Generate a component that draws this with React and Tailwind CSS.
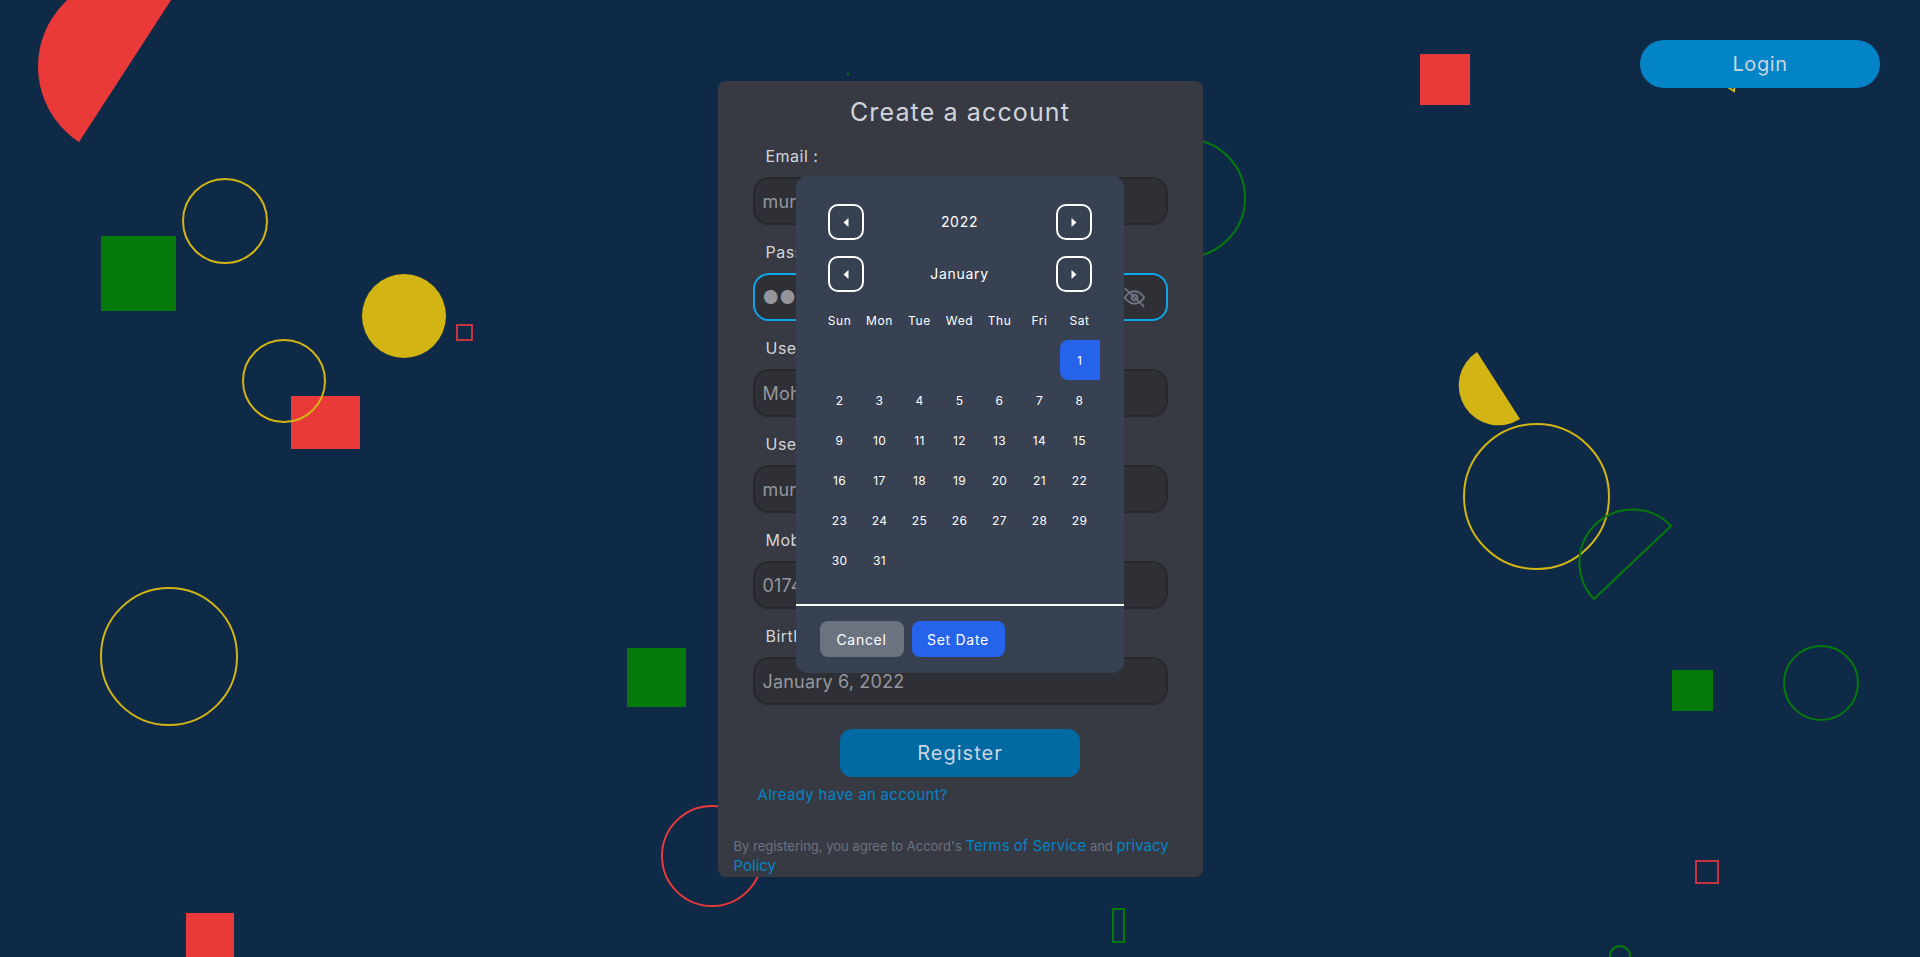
import React from 'react';

const fields = [
    { label: 'Email :', value: 'murad@gmail.com' },
    { label: 'Password :', value: '●●●●●●●●', password: true },
    { label: 'User Name :', value: 'Mohammad Murad' },
    { label: 'User Id :', value: 'murad123' },
    { label: 'Mobile :', value: '01745678901' },
    { label: 'Birthday :', value: 'January 6, 2022' },
];

const weeks = [
    ['', '', '', '', '', '', 1],
    [2, 3, 4, 5, 6, 7, 8],
    [9, 10, 11, 12, 13, 14, 15],
    [16, 17, 18, 19, 20, 21, 22],
    [23, 24, 25, 26, 27, 28, 29],
    [30, 31, '', '', '', '', ''],
];

const days = ['Sun', 'Mon', 'Tue', 'Wed', 'Thu', 'Fri', 'Sat'];

const Background = () => (
    <div className="absolute inset-0 overflow-hidden">
        <div className="absolute left-[101px] top-[236px] h-[75px] w-[75px] bg-[#057a0b]" />
        <div className="absolute left-[182px] top-[178px] h-[86px] w-[86px] rounded-full border-2 border-[#d2b414]" />
        <div className="absolute left-[362px] top-[274px] h-[84px] w-[84px] rounded-full bg-[#d2b414]" />
        <div className="absolute left-[456px] top-[324px] h-[17px] w-[17px] border-2 border-[#c9323f]" />
        <div className="absolute left-[291px] top-[396px] h-[53px] w-[69px] bg-[#e93939]" />
        <div className="absolute left-[242px] top-[339px] h-[84px] w-[84px] rounded-full border-2 border-[#d2b414]" />
        <div className="absolute left-[100px] top-[587px] h-[139px] w-[138px] rounded-full border-2 border-[#d2b414]" />
        <div className="absolute left-[627px] top-[648px] h-[59px] w-[59px] bg-[#057a0b]" />
        <div className="absolute left-[186px] top-[913px] h-[48px] w-[48px] bg-[#e93939]" />
        <div className="absolute left-[661px] top-[805px] h-[102px] w-[102px] rounded-full border-2 border-[#e93939]" />
        <div className="absolute left-[847px] top-[73px] h-[2px] w-[2px] bg-[#057a0b]" />
        <div className="absolute left-[1126px] top-[138px] h-[120px] w-[120px] rounded-full border-2 border-[#057a0b]" />
        <div className="absolute left-[1112px] top-[908px] h-[35px] w-[13px] border-2 border-[#057a0b]" />
        <div className="absolute left-[1420px] top-[54px] h-[51px] w-[50px] bg-[#e93939]" />
        <div className="absolute left-[1463px] top-[423px] h-[147px] w-[147px] rounded-full border-2 border-[#d2b414]" />
        <div className="absolute left-[1672px] top-[670px] h-[41px] w-[41px] bg-[#057a0b]" />
        <div className="absolute left-[1783px] top-[645px] h-[76px] w-[76px] rounded-full border-2 border-[#057a0b]" />
        <div className="absolute left-[1695px] top-[860px] h-[24px] w-[24px] border-2 border-[#c9323f]" />
        <div className="absolute left-[1609px] top-[945px] h-[22px] w-[22px] rounded-full border-2 border-[#057a0b]" />
        <svg className="absolute inset-0" width="1920" height="957" viewBox="0 0 1920 957" fill="none">
            <path d="M79 142 A90 90 0 0 1 177 -9 Z" fill="#e93939" />
            <path d="M1477 352 A39 39 0 0 0 1520 419 Z" fill="#d2b414" />
            <path d="M1594 599 A50 50 0 0 1 1671 526 Z" stroke="#057a0b" strokeWidth="2" />
            <path d="M1726 86 L1734 91 L1735 84" stroke="#d2b414" strokeWidth="2" />
        </svg>
    </div>
);

const ArrowButton = ({ dir }) => (
    <button className="flex h-9 w-9 items-center justify-center rounded-[10px] border-2 border-white">
        <svg width="6" height="9" viewBox="0 0 6 9" fill="white">
            {dir === 'left' ? <path d="M5.5 0v9L0.5 4.5z" /> : <path d="M0.5 0v9l5-4.5z" />}
        </svg>
    </button>
);

const EyeSlash = () => (
    <svg className="mr-3 text-[#6b7280]" width="23" height="23" viewBox="0 0 24 24" fill="none" stroke="currentColor" strokeWidth="2" strokeLinecap="round">
        <path d="M2 12s3.6-6.5 10-6.5S22 12 22 12s-3.6 6.5-10 6.5S2 12 2 12z" />
        <circle cx="12" cy="12" r="3" />
        <path d="M2.5 3l19 18" />
    </svg>
);

const DatePicker = () => (
    <div className="absolute left-[78px] top-[95px] flex h-[497px] w-[328px] flex-col rounded-xl bg-[#374151] text-white">
        <div className="flex flex-col gap-4 px-8 pt-7">
            <div className="flex h-9 items-center justify-between">
                <ArrowButton dir="left" />
                <span className="pb-[2px] text-[14px] tracking-[0.05em]">2022</span>
                <ArrowButton dir="right" />
            </div>
            <div className="flex h-9 items-center justify-between">
                <ArrowButton dir="left" />
                <span className="pb-[2px] text-[14px] tracking-[0.05em]">January</span>
                <ArrowButton dir="right" />
            </div>
        </div>
        <div className="mx-6 mt-[17px] grid h-6 grid-cols-7 items-center text-center text-[12px] tracking-[0.05em]">
            {days.map((d) => <span key={d}>{d}</span>)}
        </div>
        <div className="mx-6 mt-[7px]">
            {weeks.map((week, i) => (
                <div key={i} className="grid h-10 grid-cols-7 text-center text-[12px] tracking-[0.03em]">
                    {week.map((d, j) => (
                        <span
                            key={j}
                            className={`flex items-center justify-center pt-[1px] ${d === 1 ? 'rounded-l-lg bg-[#2563eb]' : ''}`}
                        >
                            {d}
                        </span>
                    ))}
                </div>
            ))}
        </div>
        <div className="mt-[24px] h-[2px] bg-white" />
        <div className="flex gap-2 px-6 pt-[15px]">
            <button className="h-9 w-[84px] rounded-lg bg-[#6b7280] text-[14px] tracking-[0.05em]">Cancel</button>
            <button className="h-9 w-[93px] rounded-lg bg-[#2563eb] text-[14px] tracking-[0.05em]">Set Date</button>
        </div>
    </div>
);

const App = () => {
    return (
        <div className="relative h-[957px] overflow-hidden bg-[#0f2a47] font-['Inter',sans-serif]">
            <Background />
            <button className="absolute left-[1640px] top-[40px] h-12 w-60 rounded-3xl bg-[#0284c7] text-[20px] tracking-[0.03em] text-[#cbd5e1]">
                Login
            </button>

            <div className="relative mx-auto mt-[81px] flex h-[796px] w-[485px] flex-col rounded-lg bg-[#373a42]">
                <h1 className="mt-[15px] text-center text-[25px] leading-8 tracking-[0.045em] text-[#d1d5db]">
                    Create a account
                </h1>
                <div className="mt-[15px] flex flex-col">
                    {fields.map((f) => (
                        <div key={f.label} className="flex h-24 flex-col px-[35px]">
                            <label className="ml-[13px] h-[34px] pt-[1px] text-[16px] leading-6 tracking-[0.03em] text-[#d1d5db]">{f.label}</label>
                            <div className={`flex h-12 items-center justify-between rounded-2xl border-2 bg-[#2e3036] px-2 text-[#94969c] ${f.password ? 'border-[#0ea5e9]' : 'border-[#27282c]'}`}>
                                <span className="text-[18px] tracking-[0.01em]">{f.value}</span>
                                {f.password && <EyeSlash />}
                            </div>
                        </div>
                    ))}
                </div>
                <button className="mx-auto mt-[10px] h-12 w-60 shrink-0 rounded-xl bg-[#026aa2] text-[20px] tracking-[0.05em] text-[#cbd5e1]">
                    Register
                </button>
                <a className="ml-[40px] mt-[6px] text-[15px] leading-6 tracking-[0.02em] text-[#0284c7]">Already have an account?</a>
                <p className="mt-[29px] px-[16px] text-[13px] leading-5 text-[#6b7280]">
                    By registering, you agree to Accord's <a className="text-[15px] text-[#0284c7]">Terms of Service</a> and <a className="text-[15px] text-[#0284c7]">privacy</a> <a className="text-[15px] text-[#0284c7]">Policy</a>
                </p>
                <DatePicker />
            </div>
        </div>
    );
};

export default App;
